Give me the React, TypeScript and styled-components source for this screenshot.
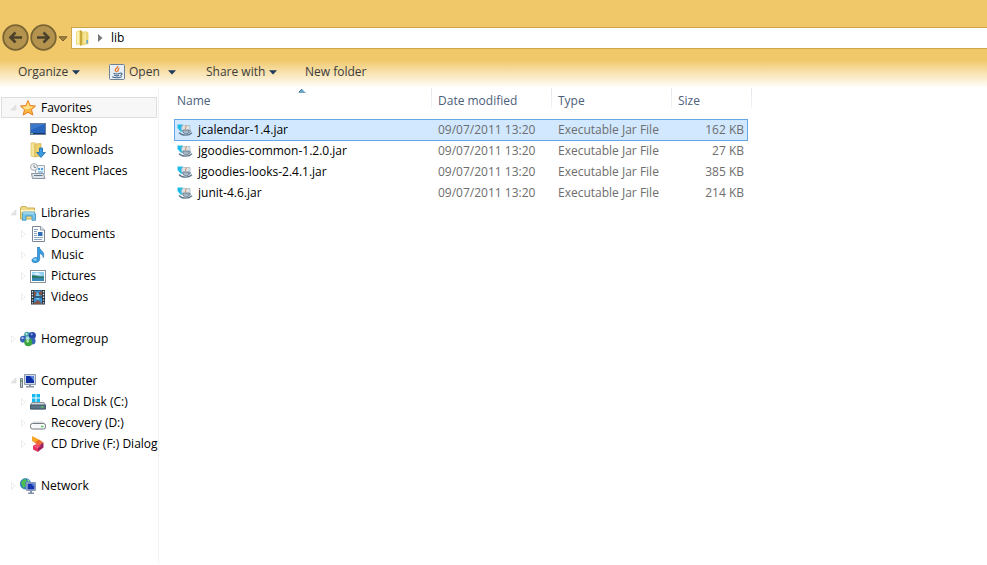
import React from "react";
import styled, { createGlobalStyle, css } from "styled-components";

const GlobalStyle = createGlobalStyle`
  * { box-sizing: border-box; }
  body {
    margin: 0;
    background: #fff;
    color: #000;
    font: 12px/20px "Open Sans", "Noto Sans", sans-serif;
  }
  button, input, table { font: inherit; color: inherit; }
  button { border: 0; padding: 0; background: none; cursor: pointer; }
`;

const Window = styled.div`
  min-height: 100vh;
  display: flex;
  flex-direction: column;
`;

const NavBar = styled.header`
  display: flex;
  align-items: center;
  padding: 24px 0 3px 2px;
  background: #f0c869;
`;

const RoundButton = styled.button`
  width: 28px;
  height: 28px;
  flex: none;
  display: flex;
`;

const HistoryButton = styled.button`
  width: 13px;
  height: 28px;
  display: flex;
  align-items: center;
  padding-top: 2px;
`;

const AddressBar = styled.div`
  flex: 1;
  height: 22px;
  display: flex;
  align-items: center;
  gap: 8px;
  padding-left: 2px;
  background: #fff;
  border: 1px solid #cfa54c;
  border-right: 0;
`;

const Crumb = styled.button`
  line-height: 20px;
`;

const Toolbar = styled.div`
  display: grid;
  grid-template-columns: 91px 97px 99px auto 1fr;
  padding: 6px 0 5px 18px;
  background: linear-gradient(#f0c869 0, #f0c869 15%, #f7e0a9 50%, #fdf6e6 85%, #fff 100%);
  color: #3b3b3b;
`;

const Tool = styled.button<{ $gap?: number }>`
  height: 22px;
  display: flex;
  align-items: center;
  gap: ${(p) => p.$gap ?? 4}px;
  white-space: nowrap;
`;

const SplitTool = styled.div`
  display: flex;
  align-items: center;
  gap: 8px;
`;

const Body = styled.div`
  flex: 1;
  display: flex;
  margin-bottom: 2px;
`;

const Sidebar = styled.nav`
  width: 159px;
  flex: none;
  padding: 9px 1px 9px 1px;
  border-right: 1px solid #f2f2f2;
`;

const Tree = styled.ul`
  list-style: none;
  margin: 0;
  padding: 0;
`;

const Group = styled.li`
  margin-bottom: 21px;
`;

const TreeItem = styled.button<{ $level: number; $active?: boolean }>`
  width: 100%;
  height: 21px;
  display: flex;
  align-items: center;
  padding-left: ${(p) => (p.$level === 1 ? 8 : 18)}px;
  border: 1px solid ${(p) => (p.$active ? "#dedede" : "transparent")};
  background: ${(p) => (p.$active ? "#f7f7f7" : "transparent")};
  white-space: nowrap;
`;

const ArrowSlot = styled.span`
  width: 10px;
  flex: none;
  display: flex;
`;

const ItemLabel = styled.span`
  margin-left: 5px;
`;

const Main = styled.main`
  flex: 1;
  min-width: 0;
  padding-left: 15px;
`;

const FileTable = styled.table`
  display: block;
  width: 578px;
`;

const Head = styled.thead`
  display: block;
  padding-bottom: 6px;
`;

const Rows = styled.tbody`
  display: block;
  padding-right: 4px;
`;

const columns = css`
  display: grid;
  grid-template-columns: 258px 120px 120px 1fr;
`;

const HeadRow = styled.tr`
  ${columns}
`;

const HeadCell = styled.th<{ $first?: boolean }>`
  position: relative;
  height: 25px;
  padding: 3px 0 0 ${(p) => (p.$first ? 3 : 6)}px;
  font-weight: 400;
  text-align: left;
  color: #4c607a;
  background: linear-gradient(#e3e8ee, #f0f3f7) right top / 1px 20px no-repeat;
`;

const SortMark = styled.span`
  position: absolute;
  left: calc(50% - 5px);
  top: 1px;
  display: flex;
`;

const Row = styled.tr<{ $selected?: boolean }>`
  ${columns}
  height: 21px;
  color: #6d6d6d;
  ${(p) =>
    p.$selected &&
    css`
      height: 22px;
      margin-bottom: -1px;
      background: #d1e8ff;
      box-shadow: inset 0 0 0 1px #66a7e8;
    `}
`;

const Cell = styled.td<{ $right?: boolean }>`
  height: 21px;
  padding: 0 4px 0 6px;
  line-height: 21px;
  text-align: ${(p) => (p.$right ? "right" : "left")};
  white-space: nowrap;
`;

const NameCell = styled(Cell)`
  display: flex;
  align-items: center;
  gap: 5px;
  padding-left: 3px;
  color: #000;
`;

const Svg = styled.svg`
  display: block;
  flex: none;
`;

type Kids = { children: React.ReactNode };
const Icon16 = ({ children }: Kids) => (
  <Svg width="16" height="16" viewBox="0 0 16 16" aria-hidden="true">
    {children}
  </Svg>
);

const NavArrow = ({ forward }: { forward?: boolean }) => (
  <Svg width="28" height="28" viewBox="0 0 28 28" aria-hidden="true">
    <circle cx="13.5" cy="13.5" r="12.3" fill="#b3934d" stroke="#7a6434" strokeWidth="1.8" />
    <path
      d={forward ? "M7 13.5H19M13.5 8.5L18.5 13.5L13.5 18.5" : "M20 13.5H8M13.5 8.5L8.5 13.5L13.5 18.5"}
      fill="none"
      stroke="#4b412a"
      strokeWidth="2.6"
    />
  </Svg>
);

const Caret = () => (
  <Svg width="8" height="5" viewBox="0 0 8 5" aria-hidden="true">
    <path d="M0 .3H8L4 4.6Z" fill="#1e395b" />
  </Svg>
);

const FolderIcon = () => (
  <Icon16>
    <path d="M2 1.5L6 0V15L2 14.5Z" fill="#f1dc7c" />
    <path d="M6 0L8 1V15L6 16Z" fill="#c9a93c" />
    <path d="M8 1.5H13L14.5 3V14L8 15.5Z" fill="#ecd572" />
    <path d="M3 2L5 1.5V14L3 13.5Z" fill="#fbf0b5" />
    <path d="M9.5 2.5H12V13L9.5 13.5Z" fill="#f6e79c" />
    <path d="M12.5 10H14V13.5H12.5Z" fill="#5aa5dd" />
  </Icon16>
);

const JavaIcon = () => (
  <Icon16>
    <rect x=".5" y=".5" width="15" height="15" rx="1" fill="#e8eef4" stroke="#6e8296" />
    <path d="M8.8 2C9 4 5.6 4.6 6.3 6.4L7.7 8.2M10.4 4.2C8 5 9.9 6.2 8.5 7.8" fill="none" stroke="#e87524" strokeWidth="1.3" />
    <path d="M4.5 9.3C6 10.2 9.5 10.1 10.8 9.3M5.2 11.2C7 12 9 12 10.2 11.2M3.2 12.8C6 14.2 10.5 14 12.8 12.6M11 9.2C14 8.5 13.3 11 11.3 11.5" fill="none" stroke="#41678d" strokeWidth="1.1" />
  </Icon16>
);

const StarIcon = () => (
  <Icon16>
    <path d="M8 .6L10.1 5.5L15.5 6L11.5 9.7L12.8 15L8 12.3L3.2 15L4.5 9.7L.5 6L5.9 5.5Z" fill="#fbb941" stroke="#e47b1c" />
    <path d="M8 2L9.5 6.3L13.8 6.8L9 9L5 9.5L2.3 6.8L6.5 6.3Z" fill="#ffe08a" />
  </Icon16>
);

const DesktopIcon = () => (
  <Icon16>
    <rect x=".5" y="2.5" width="15" height="11" fill="#2764bd" stroke="#687c9b" />
    <path d="M1 3H15L1 9Z" fill="#3c79cc" />
    <path d="M1 12H15V13H1Z" fill="#1b3564" />
    <path d="M1 12H3V13H1Z" fill="#74c46a" />
  </Icon16>
);

const DownloadsIcon = () => (
  <Icon16>
    <path d="M1 1L5 .5V15L1 14Z" fill="#f6e49a" stroke="#dbc05c" strokeWidth=".7" />
    <path d="M5 2L11 1.5V14L5 15Z" fill="#ecd06c" stroke="#cfae48" strokeWidth=".7" />
    <path d="M9.5 6H12.5V10.5H15.3L11 15.5L6.7 10.5H9.5Z" fill="#3b9be0" stroke="#1c69b4" strokeWidth=".8" />
  </Icon16>
);

const RecentIcon = () => (
  <Icon16>
    <path d="M5.5 2.5H14.5V11H5.5Z" fill="#eef3f7" stroke="#9eabb7" />
    <path d="M8 5H10V7H8ZM11 5H13V7H11ZM8 8.5H13V9.5H8Z" fill="#4e9edc" />
    <path d="M1.5 10.5H13.5L15 15.5H2.5Z" fill="#dce3e9" stroke="#8b98a5" />
    <path d="M4 12.5H12.5" stroke="#6b7987" />
    <circle cx="4" cy="4" r="3.4" fill="#f2f4f5" stroke="#a2abb2" />
    <path d="M4 2V4.3H6" fill="none" stroke="#66717b" strokeWidth=".8" />
  </Icon16>
);

const LibraryIcon = () => (
  <Icon16>
    <path d="M.5 2.5L2 1.5H6L7 3H14.5V14H.5Z" fill="#efd986" stroke="#caae52" />
    <path d="M1 5H14.5V7H1Z" fill="#fff5c8" />
    <path d="M3 7H14L15.5 9V15.3H12V11H6V15.3H2.4V9Z" fill="#79c5e8" stroke="#3b8fc0" strokeWidth=".8" />
    <path d="M3 8H14" stroke="#c8ecfa" />
  </Icon16>
);

const DocumentIcon = () => (
  <Icon16>
    <path d="M2.5 .5H10.5L14.5 4V15.5H2.5Z" fill="#fbfcfd" stroke="#7b8794" />
    <path d="M10.5 .5V4H14.5" fill="#dfe6ec" stroke="#7b8794" strokeWidth=".8" />
    <path d="M4 3.5H8M4 5.5H7M4 7.5H7M4 9.5H7M4 11.5H13M4 13.5H12" stroke="#8ba4bd" />
    <path d="M8 6H12.5V10H8Z" fill="#2e6eb8" />
  </Icon16>
);

const MusicIcon = () => (
  <Icon16>
    <path d="M7.5 0H9.3C9.5 3.5 15.6 4.3 13.2 10.6C13 7.6 11 6.8 9.7 6.2V12.3C9.5 14.5 7.2 15.7 5 15.7C2.8 15.7 1.6 14.4 2 12.9C2.5 10.9 5.4 10 7.5 10.8Z" fill="#369ce0" stroke="#1d6eac" strokeWidth=".6" />
    <ellipse cx="5" cy="12.6" rx="2" ry="1.1" fill="#8fd3fa" />
  </Icon16>
);

const PictureIcon = () => (
  <Icon16>
    <rect x=".5" y="2.5" width="15" height="12" fill="#fff" stroke="#8a929a" />
    <path d="M2 4H14V10H2Z" fill="#8fcdf1" />
    <path d="M2 7.5C5 6.5 7 9 14 8.3V10H2Z" fill="#287562" />
    <path d="M2 10H14V13H2Z" fill="#3987b5" />
    <path d="M2 6L7 4.5L12 6.5L7 7Z" fill="#e2f3fb" />
  </Icon16>
);

const VideoIcon = () => (
  <Icon16>
    <path d="M1 1H15V15.5H1Z" fill="#26303c" />
    <path d="M4 1.5H12V7.5H4ZM4 8.5H12V15H4Z" fill="#398bcb" />
    <path d="M4 2L7 4L5 7.5H4ZM9 3L12 2V6L9 7ZM4 14L8 11L12 15H4Z" fill="#855445" />
    <path d="M7 3L9 6L11 7H6ZM5 9H10L8 11Z" fill="#74c3ef" />
    <path d="M2.5 2V15M13.5 2V15" stroke="#dce4ea" strokeWidth="1.4" strokeDasharray="1.4 1.4" />
  </Icon16>
);

const HomegroupIcon = () => (
  <Icon16>
    <circle cx="7.3" cy="4" r="3.2" fill="#49a3a8" />
    <circle cx="12.3" cy="4.6" r="3.6" fill="#2446a8" />
    <circle cx="3.4" cy="8.2" r="3.4" fill="#3a62b8" />
    <circle cx="12" cy="10" r="3.6" fill="#3465b5" />
    <circle cx="8.3" cy="11.3" r="4" fill="#3ba443" />
    <circle cx="7.6" cy="7.2" r="1.9" fill="#a6dcdf" />
    <circle cx="11.7" cy="3.3" r="1.1" fill="#8fa8e4" />
    <circle cx="6.6" cy="3" r="1" fill="#c6ecdf" />
    <circle cx="2.6" cy="7" r="1.1" fill="#b9c9ed" />
    <circle cx="7.7" cy="10.2" r="1.3" fill="#b9ecae" />
  </Icon16>
);

const ComputerIcon = () => (
  <Icon16>
    <path d="M.5 5.5H2.5V14.5H.5Z" fill="#c7cdd2" stroke="#747e87" />
    <path d="M1 7H2V9H1Z" fill="#58c74c" />
    <path d="M4.5 1.5H15.5V11.5H4.5Z" fill="#cfd8e5" stroke="#8b98ad" />
    <path d="M6 3H14V10H6Z" fill="#1030a5" />
    <path d="M10 3H14V8Z" fill="#5c83dc" />
    <path d="M9 12H11V13H14V14.5H6V13H9Z" fill="#8b96a5" />
  </Icon16>
);

const Drive = ({ windows }: { windows?: boolean }) => (
  <Icon16>
    {windows ? (
      <>
        <path d="M2 8.5H14L15.5 11V15H.5V11Z" fill="#cfd6da" stroke="#8b9298" />
        <path d="M.5 11H15.5V15H.5Z" fill="#5a7587" stroke="#44596a" />
        <path d="M2 0H5.5V3.5H2ZM6.5 0H10V3.5H6.5ZM2 4.5H5.5V8H2ZM6.5 4.5H10V8H6.5Z" fill="#12b8ee" />
        <path d="M11 13H13.5" stroke="#54ca58" strokeWidth="1.4" />
      </>
    ) : (
      <>
        <path d="M3 6.5H13L15.5 9.5H.5Z" fill="#d9dcde" />
        <rect x=".5" y="8.5" width="15" height="5.5" rx="2" fill="#f7f8f8" stroke="#737b81" />
        <path d="M11 11.5H13.5" stroke="#54ca58" strokeWidth="1.4" />
      </>
    )}
  </Icon16>
);

const DialogIcon = () => (
  <Icon16>
    <path d="M2 0L9 3.5V9L2 5Z" fill="#f6a728" />
    <path d="M9 3.5L13.5 6.5L9 9.5L4.5 6.8Z" fill="#ef6d2f" />
    <path d="M13.5 6.5V11.5L8 15.8V10Z" fill="#9e2162" />
    <path d="M3 9.5L8 12V16L3 13.5Z" fill="#e93361" />
    <path d="M3 9.5L6.5 8L11 10L8 12Z" fill="#f4486d" />
  </Icon16>
);

const NetworkIcon = () => (
  <Icon16>
    <circle cx="5.5" cy="5.8" r="5.3" fill="#2b87cf" stroke="#2467a4" strokeWidth=".6" />
    <path d="M1 4L4 1L7 2L5 5L6 8L3 10L2 7Z" fill="#50bd4d" />
    <path d="M7 1L10 3L8 4Z" fill="#91dc83" />
    <path d="M6.5 4.5H15.5V12.5H6.5Z" fill="#cbd5e6" stroke="#8b9ab4" />
    <path d="M7.5 5.5H14.5V11.5H7.5Z" fill="#1736ae" />
    <path d="M11 5.5H14.5V9.5Z" fill="#5681dc" />
    <path d="M10 13H12V14.5H14V16H8V14.5H10Z" fill="#8494aa" />
  </Icon16>
);

const JarIcon = () => (
  <Icon16>
    <path d="M.5 2.5H6L4.5 6.5L6 10L3.5 9.5L.5 6Z" fill="#20bce8" />
    <path d="M5 3.5H13V10H6L4.5 7Z" fill="#dce4e9" stroke="#a3b1bc" strokeWidth=".7" />
    <path d="M9.2 3.5C9.7 5 7.8 5.2 8.6 7.4" fill="none" stroke="#e0905f" strokeWidth="1.1" />
    <path d="M6 8H12V10.5C11 12.3 8 12.3 6 10.5Z" fill="#a8b7c3" stroke="#526d86" strokeWidth=".7" />
    <path d="M2 10.5C5 14 12 14 15 10.8" fill="none" stroke="#627b8e" strokeWidth="1.3" />
    <path d="M12 8.3C14.5 8 14 10.2 12 10.5" fill="none" stroke="#7d909f" />
  </Icon16>
);

type Arrow = "open" | "closed";
const TreeArrow = ({ kind }: { kind: Arrow }) => (
  <Svg width="8" height="8" viewBox="0 0 8 8" aria-hidden="true">
    {kind === "open" ? (
      <path d="M6 .8V6H.8Z" fill="#e3e3e3" stroke="#dadada" strokeWidth=".6" />
    ) : (
      <path d="M1.5 .7L5.3 4L1.5 7.3Z" fill="#fff" stroke="#ececec" />
    )}
  </Svg>
);

type Node = { label: string; icon: React.ReactNode; arrow?: Arrow; active?: boolean; items?: Node[] };

const tree: Node[] = [
  {
    label: "Favorites",
    icon: <StarIcon />,
    arrow: "open",
    active: true,
    items: [
      { label: "Desktop", icon: <DesktopIcon /> },
      { label: "Downloads", icon: <DownloadsIcon /> },
      { label: "Recent Places", icon: <RecentIcon /> },
    ],
  },
  {
    label: "Libraries",
    icon: <LibraryIcon />,
    arrow: "open",
    items: [
      { label: "Documents", icon: <DocumentIcon />, arrow: "closed" },
      { label: "Music", icon: <MusicIcon />, arrow: "closed" },
      { label: "Pictures", icon: <PictureIcon />, arrow: "closed" },
      { label: "Videos", icon: <VideoIcon />, arrow: "closed" },
    ],
  },
  { label: "Homegroup", icon: <HomegroupIcon />, arrow: "closed" },
  {
    label: "Computer",
    icon: <ComputerIcon />,
    arrow: "open",
    items: [
      { label: "Local Disk (C:)", icon: <Drive windows />, arrow: "closed" },
      { label: "Recovery (D:)", icon: <Drive />, arrow: "closed" },
      { label: "CD Drive (F:) Dialog", icon: <DialogIcon />, arrow: "closed" },
    ],
  },
  { label: "Network", icon: <NetworkIcon />, arrow: "closed" },
];

const files = [
  { name: "jcalendar-1.4.jar", size: "162 KB", selected: true },
  { name: "jgoodies-common-1.2.0.jar", size: "27 KB" },
  { name: "jgoodies-looks-2.4.1.jar", size: "385 KB" },
  { name: "junit-4.6.jar", size: "214 KB" },
];

const TreeRow = ({ node, level }: { node: Node; level: number }) => (
  <TreeItem $level={level} $active={node.active}>
    <ArrowSlot>{node.arrow && <TreeArrow kind={node.arrow} />}</ArrowSlot>
    {node.icon}
    <ItemLabel>{node.label}</ItemLabel>
  </TreeItem>
);

export default function App() {
  return (
    <Window>
      <GlobalStyle />
      <NavBar>
        <RoundButton aria-label="Back"><NavArrow /></RoundButton>
        <RoundButton aria-label="Forward"><NavArrow forward /></RoundButton>
        <HistoryButton aria-label="Recent locations">
          <Svg width="10" height="6" viewBox="0 0 10 6" aria-hidden="true">
            <path d="M1 .8H9L5 5Z" fill="#a68440" stroke="#765f2f" />
          </Svg>
        </HistoryButton>
        <AddressBar>
          <FolderIcon />
          <Svg width="5" height="8" viewBox="0 0 5 8" aria-hidden="true">
            <path d="M0 0L4.5 4L0 8Z" fill="#777" />
          </Svg>
          <Crumb>lib</Crumb>
        </AddressBar>
      </NavBar>
      <Toolbar>
        <Tool>Organize<Caret /></Tool>
        <SplitTool>
          <Tool $gap={4}><JavaIcon />Open</Tool>
          <Tool aria-label="Open options"><Caret /></Tool>
        </SplitTool>
        <Tool>Share with<Caret /></Tool>
        <Tool>New folder</Tool>
      </Toolbar>
      <Body>
        <Sidebar>
          <Tree>
            {tree.map((group) => (
              <Group key={group.label}>
                <TreeRow node={group} level={1} />
                {group.items && (
                  <Tree>
                    {group.items.map((item) => (
                      <li key={item.label}><TreeRow node={item} level={2} /></li>
                    ))}
                  </Tree>
                )}
              </Group>
            ))}
          </Tree>
        </Sidebar>
        <Main>
          <FileTable>
            <Head>
              <HeadRow>
                <HeadCell $first>
                  Name
                  <SortMark>
                    <Svg width="8" height="4" viewBox="0 0 8 4" aria-hidden="true">
                      <path d="M4 0L8 4H0Z" fill="#6fa9c9" />
                      <path d="M4 0L1 3" stroke="#3c6a86" />
                    </Svg>
                  </SortMark>
                </HeadCell>
                <HeadCell>Date modified</HeadCell>
                <HeadCell>Type</HeadCell>
                <HeadCell>Size</HeadCell>
              </HeadRow>
            </Head>
            <Rows>
              {files.map((file) => (
                <Row key={file.name} $selected={file.selected}>
                  <NameCell><JarIcon />{file.name}</NameCell>
                  <Cell>09/07/2011 13:20</Cell>
                  <Cell>Executable Jar File</Cell>
                  <Cell $right>{file.size}</Cell>
                </Row>
              ))}
            </Rows>
          </FileTable>
        </Main>
      </Body>
    </Window>
  );
}
